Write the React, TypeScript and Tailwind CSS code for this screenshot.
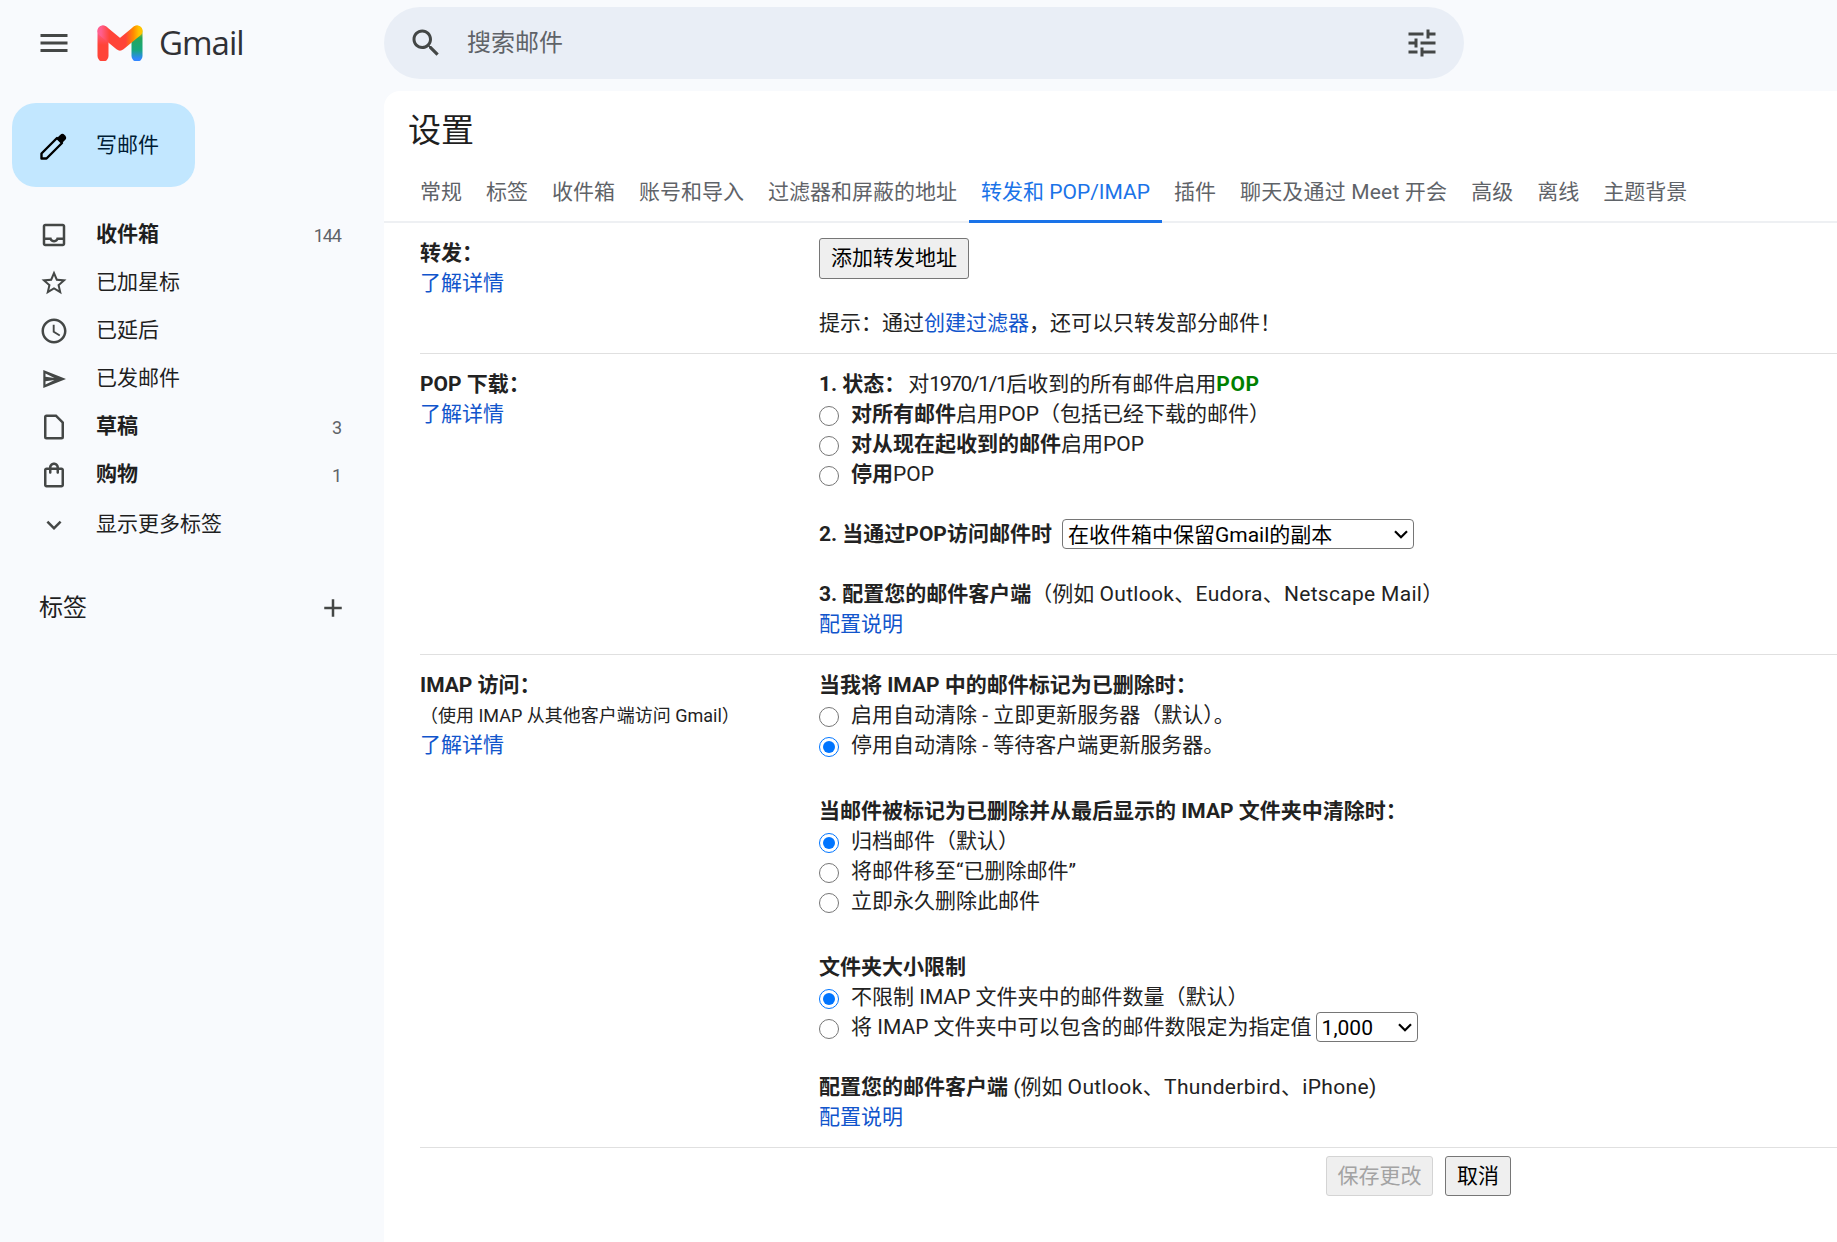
import type { ReactNode } from "react";

const ICONS = {
  menu: "M3 18h18v-2H3v2zm0-5h18v-2H3v2zm0-7v2h18V6H3z",
  search:
    "M15.5 14h-.79l-.28-.27C15.41 12.59 16 11.11 16 9.5 16 5.91 13.09 3 9.5 3S3 5.91 3 9.5 5.91 16 9.5 16c1.61 0 3.09-.59 4.23-1.57l.27.28v.79l5 4.99L20.49 19l-4.99-5zm-6 0C7.01 14 5 11.99 5 9.5S7.01 5 9.5 5 14 7.01 14 9.5 11.99 14 9.5 14z",
  tune: "M3 17v2h6v-2H3zM3 5v2h10V5H3zm10 16v-2h8v-2h-8v-2h-2v6h2zM7 9v2H3v2h4v2h2V9H7zm14 4v-2H11v2h10zm-6-4h2V7h4V5h-4V3h-2v6z",
  inbox:
    "M19 3H5c-1.1 0-2 .9-2 2v14c0 1.1.9 2 2 2h14c1.1 0 2-.9 2-2V5c0-1.1-.9-2-2-2zm0 16H5v-3h3.56c.69 1.19 1.97 2 3.45 2s2.75-.81 3.45-2H19v3zm0-5h-4.99c0 1.1-.9 2-2 2s-2-.9-2-2H5V5h14v9z",
  star: "M22 9.24l-7.19-.62L12 2 9.19 8.63 2 9.24l5.46 4.73L5.82 21 12 17.27 18.18 21l-1.63-7.03L22 9.24zM12 15.4l-3.76 2.27 1-4.28-3.32-2.88 4.38-.38L12 6.1l1.71 4.04 4.38.38-3.32 2.88 1 4.28L12 15.4z",
  clock:
    "M11.99 2C6.47 2 2 6.48 2 12s4.47 10 9.99 10C17.52 22 22 17.52 22 12S17.52 2 11.99 2zM12 20c-4.42 0-8-3.58-8-8s3.58-8 8-8 8 3.58 8 8-3.58 8-8 8zm.5-13H11v6l5.25 3.15.75-1.23-4.5-2.67z",
  send: "M3.44 4.8L21.6 12 3.44 19.2zM5.2 7.52v2.64l7.2.96zM12.4 12.88l-7.2.96v2.64z",
  draft: "M6 2h8l6 6v12a2 2 0 01-2 2H6a2 2 0 01-2-2V4a2 2 0 012-2zm0 2v16h12V8.8L13.2 4H6z",
  bag: "M18 6h-2c0-2.21-1.79-4-4-4S8 3.79 8 6H6c-1.1 0-2 .9-2 2v12c0 1.1.9 2 2 2h12c1.1 0 2-.9 2-2V8c0-1.1-.9-2-2-2zm-6-2c1.1 0 2 .9 2 2h-4c0-1.1.9-2 2-2zm6 16H6V8h2v2c0 .55.45 1 1 1s1-.45 1-1V8h4v2c0 .55.45 1 1 1s1-.45 1-1V8h2v12z",
  more: "M16.59 8.59L12 13.17 7.41 8.59 6 10l6 6 6-6z",
  add: "M19 13h-6v6h-2v-6H5v-2h6V5h2v6h6v2z",
};

function Icon({ d, className }: { d: string; className: string }) {
  return (
    <svg viewBox="0 0 24 24" fill="currentColor" className={className}>
      <path d={d} />
    </svg>
  );
}

function Pencil() {
  return (
    <svg viewBox="0 0 36 36" className="w-[36px] h-[36px] text-black">
      <path d="M5.5 26.5L21 11l5 5-15.5 15.5h-5z" fill="none" stroke="currentColor" strokeWidth="2.4" strokeLinejoin="round" />
      <path d="M20.5 11.5l3.6-3.6a3.2 3.2 0 014.5 0l.5.5a3.2 3.2 0 010 4.5l-3.6 3.6z" fill="currentColor" />
    </svg>
  );
}

function GmailLogo() {
  return (
    <svg viewBox="0 0 46 36" className="w-[46px] h-[36px]">
      <defs>
        <linearGradient id="leftLeg" x1="0" y1="6" x2="0" y2="20" gradientUnits="userSpaceOnUse">
          <stop offset="0" stopColor="#ff5f8f" />
          <stop offset="1" stopColor="#ff4438" />
        </linearGradient>
        <linearGradient id="rightLeg" x1="0" y1="4" x2="0" y2="34" gradientUnits="userSpaceOnUse">
          <stop offset="0" stopColor="#ffc400" />
          <stop offset="0.3" stopColor="#26a65b" />
          <stop offset="0.7" stopColor="#16a77f" />
          <stop offset="1" stopColor="#3186ff" />
        </linearGradient>
        <linearGradient id="vee" x1="4" y1="6" x2="42" y2="6" gradientUnits="userSpaceOnUse">
          <stop offset="0" stopColor="#ff5f8f" />
          <stop offset="0.22" stopColor="#ff4438" />
          <stop offset="0.65" stopColor="#ff4438" />
          <stop offset="0.85" stopColor="#ff8a00" />
          <stop offset="1" stopColor="#ffc400" />
        </linearGradient>
      </defs>
      <path d="M40 6V31" stroke="url(#rightLeg)" strokeWidth="11" strokeLinecap="round" fill="none" />
      <path d="M6 6V31" stroke="url(#leftLeg)" strokeWidth="11" strokeLinecap="round" fill="none" />
      <path d="M6 6L23 20L40 6" stroke="url(#vee)" strokeWidth="11" strokeLinecap="round" strokeLinejoin="round" fill="none" />
    </svg>
  );
}

const NAV = [
  { icon: ICONS.inbox, label: "收件箱", count: "144", bold: true },
  { icon: ICONS.star, label: "已加星标" },
  { icon: ICONS.clock, label: "已延后" },
  { icon: ICONS.send, label: "已发邮件" },
  { icon: ICONS.draft, label: "草稿", count: "3", bold: true },
  { icon: ICONS.bag, label: "购物", count: "1", bold: true },
];

const TABS = [
  "常规",
  "标签",
  "收件箱",
  "账号和导入",
  "过滤器和屏蔽的地址",
  "转发和 POP/IMAP",
  "插件",
  "聊天及通过 Meet 开会",
  "高级",
  "离线",
  "主题背景",
];

function Sidebar() {
  return (
    <aside className="w-[384px] shrink-0">
      <button className="ml-[12px] mt-[12px] w-[183px] h-[84px] rounded-[24px] bg-[#c2e7ff] flex items-center pl-[24px] gap-[24px] text-[21px] text-[#001d35]">
        <Pencil />
        <span className="pt-[1px]">写邮件</span>
      </button>
      <nav className="mt-[24px]">
        {NAV.map((item) => (
          <div key={item.label} className="h-[48px] flex items-center pl-[39px] pr-[43px] text-[21px] text-[#1f1f1f]">
            <Icon d={item.icon} className="w-[30px] h-[30px] text-[#444746] shrink-0" />
            <span className={`ml-[27px] flex-1 ${item.bold ? "font-bold" : ""}`}>{item.label}</span>
            {item.count && <span className="text-[18px] text-[#5f6368] tracking-[-1px]">{item.count}</span>}
          </div>
        ))}
        <div className="h-[48px] mt-[2px] flex items-center pl-[39px] text-[21px] text-[#1f1f1f]">
          <Icon d={ICONS.more} className="w-[30px] h-[30px] text-[#444746] shrink-0" />
          <span className="ml-[27px]">显示更多标签</span>
        </div>
      </nav>
      <div className="mt-[35px] h-[48px] flex items-center justify-between pl-[39px] pr-[36px] text-[24px] text-[#1f1f1f]">
        标签
        <Icon d={ICONS.add} className="w-[30px] h-[30px] text-[#444746]" />
      </div>
    </aside>
  );
}

function Line({ children, className = "" }: { children: ReactNode; className?: string }) {
  return <div className={`h-[30px] leading-[30px] whitespace-nowrap ${className}`}>{children}</div>;
}

function Anchor({ children }: { children: ReactNode }) {
  return <a className="text-[#1155cc]">{children}</a>;
}

function Radio({ name, checked, children }: { name: string; checked?: boolean; children: ReactNode }) {
  return (
    <Line className="flex items-center">
      <input type="radio" name={name} defaultChecked={checked} className="w-[20px] h-[20px] m-0 mt-[3px] mr-[12px] shrink-0" />
      <span>{children}</span>
    </Line>
  );
}

function Dropdown({ value, className }: { value: string; className: string }) {
  return (
    <span className={`relative inline-block h-[30px] ${className}`}>
      <select className="appearance-none w-full h-[30px] pl-[5px] bg-white border border-[#767676] rounded-[4px] text-black">
        <option>{value}</option>
      </select>
      <svg viewBox="0 0 14 9" className="absolute right-[6px] top-[11px] w-[14px] h-[9px] text-black">
        <path d="M1 1.2l6 6 6-6" fill="none" stroke="currentColor" strokeWidth="2.2" />
      </svg>
    </span>
  );
}

function Section({ left, children }: { left: ReactNode; children: ReactNode }) {
  return (
    <div className="flex pt-[15px] pb-[15px] border-b border-[#e0e0e0]">
      <div className="w-[399px] shrink-0">{left}</div>
      <div className="flex-1">{children}</div>
    </div>
  );
}

function Settings() {
  return (
    <main className="flex-1 min-w-0 bg-white rounded-tl-[16px]">
      <h1 className="pl-[24px] pt-[20px] pb-[12px] text-[33px] leading-[40px] font-normal text-[#1f1f1f]">设置</h1>
      <div className="h-[60px] border-b-2 border-[#eef0f3] flex pl-[24px] text-[21px] text-[#5f6368]">
        {TABS.map((tab) => (
          <div
            key={tab}
            className={`h-[60px] px-[12px] pt-[3px] flex items-center border-b-[3px] whitespace-nowrap ${
              tab.startsWith("转发") ? "text-[#1a73e8] border-[#1a73e8]" : "border-transparent"
            } ${tab.includes("Meet") ? "tracking-[0.18px]" : ""}`}
          >
            {tab}
          </div>
        ))}
      </div>

      <div className="ml-[36px] text-[21px] text-[#222]">
        <Section
          left={
            <>
              <Line className="font-bold">转发：</Line>
              <Line><Anchor>了解详情</Anchor></Line>
            </>
          }
        >
          <button className="block w-[150px] h-[41px] pt-[1px] bg-[#efefef] border border-[#767676] rounded-[3px] text-black">添加转发地址</button>
          <Line className="mt-[29px]">
            提示：通过<Anchor>创建过滤器</Anchor>，还可以只转发部分邮件！
          </Line>
        </Section>

        <Section
          left={
            <>
              <Line className="font-bold">POP 下载：</Line>
              <Line><Anchor>了解详情</Anchor></Line>
            </>
          }
        >
          <Line>
            <b>1. 状态：</b>
            <span className="ml-[3px]">对<span className="tracking-[-1.4px]">1970/1/1</span>后收到的所有邮件启用</span>
            <b className="text-[#008000] tracking-[0.6px]">POP</b>
          </Line>
          <Radio name="pop"><b>对所有邮件</b>启用POP（包括已经下载的邮件）</Radio>
          <Radio name="pop"><b>对从现在起收到的邮件</b>启用POP</Radio>
          <Radio name="pop"><b>停用</b>POP</Radio>
          <Line className="mt-[30px] flex items-center">
            <b>2. 当通过POP访问邮件时</b>
            <Dropdown value="在收件箱中保留Gmail的副本" className="ml-[10px] w-[352px]" />
          </Line>
          <Line className="mt-[30px]">
            <b>3. 配置您的邮件客户端</b>（例如 <span className="tracking-[0.3px]">Outlook、Eudora、Netscape Mail</span>）
          </Line>
          <Line><Anchor>配置说明</Anchor></Line>
        </Section>

        <Section
          left={
            <>
              <Line className="font-bold">IMAP 访问：</Line>
              <Line className="text-[18px] pt-[1px]">（使用 IMAP 从其他客户端访问 Gmail）</Line>
              <Line><Anchor>了解详情</Anchor></Line>
            </>
          }
        >
          <Line className="font-bold">当我将 IMAP 中的邮件标记为已删除时：</Line>
          <Radio name="expunge">启用自动清除 - 立即更新服务器（默认）。</Radio>
          <Radio name="expunge" checked>停用自动清除 - 等待客户端更新服务器。</Radio>
          <Line className="mt-[36px] font-bold">当邮件被标记为已删除并从最后显示的 IMAP 文件夹中清除时：</Line>
          <Radio name="purge" checked>归档邮件（默认）</Radio>
          <Radio name="purge">将邮件移至“已删除邮件”</Radio>
          <Radio name="purge">立即永久删除此邮件</Radio>
          <Line className="mt-[36px] font-bold">文件夹大小限制</Line>
          <Radio name="limit" checked>不限制 IMAP 文件夹中的邮件数量（默认）</Radio>
          <Line className="flex items-center">
            <input type="radio" name="limit" className="w-[20px] h-[20px] m-0 mt-[3px] mr-[12px] shrink-0" />
            将 IMAP 文件夹中可以包含的邮件数限定为指定值
            <Dropdown value="1,000" className="ml-[4px] w-[102px]" />
          </Line>
          <Line className="mt-[30px]">
            <b>配置您的邮件客户端</b> (例如 <span className="tracking-[0.35px]">Outlook、Thunderbird、iPhone</span>)
          </Line>
          <Line><Anchor>配置说明</Anchor></Line>
        </Section>

        <div className="flex pt-[8px] pl-[906px] gap-[12px]">
          <button disabled className="w-[107px] h-[40px] pt-[2px] bg-[#efefef] border border-[#d4d4d4] rounded-[3px] text-[#a3a3a3]">保存更改</button>
          <button className="w-[66px] h-[40px] pt-[2px] bg-[#efefef] border border-[#767676] rounded-[3px] text-black">取消</button>
        </div>
      </div>
    </main>
  );
}

export default function App() {
  return (
    <div className="w-full h-[1242px] overflow-hidden bg-[#f8fafd] flex flex-col font-['Roboto','Noto_Sans_CJK_SC',sans-serif]">
      <header className="h-[91px] shrink-0 flex items-start">
        <div className="w-[384px] h-[86px] flex items-center pl-[36px]">
          <Icon d={ICONS.menu} className="w-[36px] h-[36px] text-[#444746]" />
          <div className="ml-[25px]"><GmailLogo /></div>
          <span className="ml-[16px] text-[33px] text-[#303135] font-['Open_Sans'] tracking-[-1px]">Gmail</span>
        </div>
        <div className="mt-[7px] w-[1080px] h-[72px] rounded-[36px] bg-[#e9eef6] flex items-center pl-[24px] pr-[24px] text-[24px] text-[#5f6368]">
          <Icon d={ICONS.search} className="w-[36px] h-[36px] text-[#444746]" />
          <span className="ml-[23px] flex-1">搜索邮件</span>
          <Icon d={ICONS.tune} className="w-[36px] h-[36px] text-[#444746]" />
        </div>
      </header>
      <div className="flex-1 flex min-h-0">
        <Sidebar />
        <Settings />
      </div>
    </div>
  );
}
